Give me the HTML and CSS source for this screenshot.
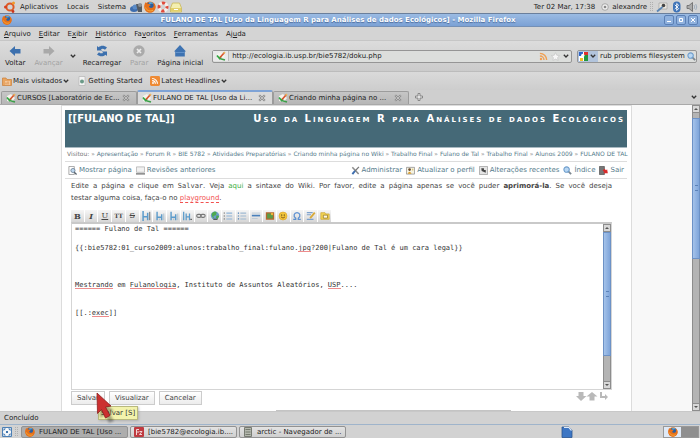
FILE: index.html
```html
<!DOCTYPE html>
<html lang="pt-BR">
<head>
<meta charset="utf-8">
<title>FULANO DE TAL</title>
<link rel="stylesheet" href="styles.css">
</head>
<body>
<svg class="defs" aria-hidden="true">
  <symbol id="firefox" viewBox="0 0 12 12"><circle cx="6" cy="6" r="5.6" fill="#e8731a"/><circle cx="6.2" cy="5" r="3.8" fill="#2b5f9f"/><path d="M5 1.2C7 .6 9 1.6 9.6 3 8 2.6 6 3 5.5 4z" fill="#58a5d8"/><path d="M.7 3 1.3 1.2 3 2.6C4.600 2.400 5.800 3.600 6.800 4.200L5 5.300C5 7 7.500 7.500 9 6.300 10 5.300 9.900 3 9.300 1.700 11.800 3.700 12.200 7 10.200 9.700 8 12.200 3.500 12.200 1.500 9.500.2 7.500.1 5 .7 3z" fill="#e6701a"/><path d="M1.600 6.500C2.500 9.500 6 10.800 9 9.200" fill="none" stroke="#f7b13c" stroke-width="1"/></symbol>
  <symbol id="wiki" viewBox="0 0 10 10"><path d="M1 3 5 1l4 4-3 4-5-1z" fill="#f5f3ec"/><path d="M1 4.500 3.500 7.500 5 5.500" fill="none" stroke="#2fa843" stroke-width="1.700"/><path d="M3.500 7.500 9 9" stroke="#3c9e49" stroke-width="1.500"/><path d="M4 6.500 8.500 1.500" stroke="#d9532c" stroke-width="1.600"/><path d="M7.600 2.500 9 1" stroke="#e9b75e" stroke-width="1.600"/></symbol>
  <symbol id="chev" viewBox="0 0 6 6"><path d="M.8 1.800 3 4 5.200 1.800" fill="none" stroke="#333" stroke-width="1.300"/></symbol>
  <symbol id="close" viewBox="0 0 8 8"><path d="M1.200 1.200 6.800 6.800M6.800 1.200 1.200 6.800" stroke="#8d8d8d" stroke-width="2.200"/><path d="M1.600 1.600 6.400 6.400M6.400 1.600 1.600 6.400" stroke="#d5d5d5" stroke-width=".7"/></symbol>
  <symbol id="rss" viewBox="0 0 10 10"><circle cx="2.200" cy="7.800" r="1.300"/><path d="M1 4.500A4.500 4.500 0 0 1 5.500 9M1 1.500A7.500 7.500 0 0 1 8.500 9" fill="none" stroke="currentColor" stroke-width="1.600"/></symbol>
  <symbol id="lens" viewBox="0 0 10 10"><path d="M6 6 9 9" stroke="#7d8790" stroke-width="2"/><circle cx="4" cy="4" r="3" fill="#b9d7f3" stroke="#6d9dcc" stroke-width="1.200"/></symbol>
  <symbol id="hlines" viewBox="0 0 12 12"><path d="M2.500 1v10M8 4v7M2.500 7.500H8" stroke="#5b9bcb" stroke-width="1.700" fill="none"/><path d="M10.500 3v8M5.500 9v2" stroke="#a3bccd" stroke-width="1"/></symbol>
</svg>

<header class="panel">
  <nav class="panel-menu">
    <svg class="i12" viewBox="0 0 12 12"><circle cx="6" cy="6" r="3.600" fill="none" stroke="#dd5a25" stroke-width="2"/><circle cx="1.500" cy="6" r="1.500" fill="#d8401f"/><circle cx="9.500" cy="2" r="1.500" fill="#f09a2a"/><circle cx="9" cy="10.500" r="1.400" fill="#c8331e"/></svg>
    <a href="#">Aplicativos</a><a href="#">Locais</a><a href="#">Sistema</a>
  </nav>
  <div class="launchers">
    <svg class="i13" viewBox="0 0 13 12"><ellipse cx="4" cy="8" rx="4" ry="3" fill="#3d6dae"/><circle cx="5" cy="6" r="2.500" fill="#5b8bc6"/><path d="M6 3h6v8H8z" fill="#545b62"/><circle cx="10" cy="4" r="2" fill="#8d9297"/></svg>
    <svg class="i12"><use href="#firefox"/></svg>
    <svg class="i12" viewBox="0 0 12 12"><circle cx="6" cy="6" r="4" fill="none" stroke="#f3efec" stroke-width="3"/><circle cx="6" cy="6" r="4" fill="none" stroke="#df4b3c" stroke-width="3" stroke-dasharray="3.140 3.140" stroke-dashoffset="1.570"/></svg>
    <svg class="i12" viewBox="0 0 12 12"><path d="M2.500 2h7l2 5v4H.5V7z" fill="#f4efb0" stroke="#c9b855" stroke-width=".8"/><path d="M1 7h10v3.500H1z" fill="#e2cf6a"/><path d="M4 8.500h4" stroke="#fff" stroke-width="1"/></svg>
  </div>
  <div class="tray">
    <span>Ter 02 Mar, 17:38</span>
    <svg class="i8" viewBox="0 0 8 8"><circle cx="4" cy="4" r="3.300" fill="#eee" stroke="#999" stroke-width=".8"/><circle cx="4" cy="4" r="1.300" fill="#888"/></svg>
    <span>alexandre</span>
    <i class="grip"></i>
    <svg class="i12" viewBox="0 0 12 12"><path d="M3 2h8v6H3z" fill="#ece9e2" stroke="#999" stroke-width=".6"/><circle cx="7.500" cy="4.500" r="1.800" fill="#444"/><path d="M1 10.500 6.500 6" stroke="#5b86b4" stroke-width="1.800"/></svg>
    <svg class="i12" viewBox="0 0 12 12"><rect x="2" y=".5" width="7.500" height="11" rx="3.700" fill="#3f74b8"/><path d="M3.800 3.800 7.600 7.600 5.700 9.500v-7L7.600 4.300 3.800 8" fill="none" stroke="#fff" stroke-width=".9"/></svg>
    <svg class="i12" viewBox="0 0 12 12"><path d="M1 4.500h2L6.500 1.500v9L3 7.500H1z" fill="#aaa" stroke="#666" stroke-width=".8"/><path d="M8 4q1.500 2 0 4M9.700 3q2.200 3 0 6" fill="none" stroke="#9aa8b8" stroke-width=".9"/></svg>
  </div>
</header>

<div class="titlebar">
  <svg class="i10"><use href="#firefox"/></svg>
  <h1>FULANO DE TAL [Uso da Linguagem R para Análises de dados Ecológicos] - Mozilla Firefox</h1>
  <div class="winbtns">
    <button aria-label="Minimizar"><svg viewBox="0 0 8 8"><path d="M2 5.500h4"/></svg></button>
    <button aria-label="Maximizar"><svg viewBox="0 0 8 8"><path d="M2.500 2.500h3v3h-3z"/></svg></button>
    <button aria-label="Fechar"><svg viewBox="0 0 8 8"><path d="M2 2 6 6M6 2 2 6"/></svg></button>
  </div>
</div>

<nav class="menubar">
  <a href="#"><u>A</u>rquivo</a><a href="#"><u>E</u>ditar</a><a href="#">E<u>x</u>ibir</a><a href="#"><u>H</u>istórico</a><a href="#">Fa<u>v</u>oritos</a><a href="#"><u>F</u>erramentas</a><a href="#">Aj<u>u</u>da</a>
</nav>

<div class="toolbar">
  <button class="tool"><svg viewBox="0 0 12 12"><path d="M.5 6 6 1v3h5.500v4.500H6V11z" fill="#3c70ae"/></svg>Voltar</button>
  <button class="tool" disabled><svg viewBox="0 0 12 12"><path d="M11.500 6 6 1v3H.5v4.500H6V11z" fill="#a9a9a9"/></svg>Avançar</button>
  <button class="drop" aria-label="Histórico recente"><svg class="i6"><use href="#chev"/></svg></button>
  <button class="tool"><svg viewBox="0 0 12 12"><path d="M1 5.500V1l1.600 1.300C5 0 8.500.4 11 2.500L9 4.800C7.500 3.400 6 3.300 4.800 4.300L6.300 5.500zM11 6.500V11L9.400 9.700C7 12 3.500 11.600 1 9.500L3 7.200c1.500 1.400 3 1.500 4.200.5L5.700 6.500z" fill="#3c70ae"/></svg>Recarregar</button>
  <button class="tool" disabled><svg viewBox="0 0 12 12"><circle cx="6" cy="6" r="5.700" fill="#aaa"/><path d="M4 4 8 8M8 4 4 8" stroke="#ececec" stroke-width="1.700"/></svg>Parar</button>
  <button class="tool"><svg viewBox="0 0 12 12"><path d="M6 0 12 6.500H10.800V11.500H1.200V6.500H0z" fill="#3e73b2"/><path d="M1.500 7.500h9" stroke="#6c9ad0" stroke-width=".8"/></svg>Página inicial</button>
  <div class="url">
    <span class="site"><svg class="i10"><use href="#wiki"/></svg></span>
    <input type="text" aria-label="Endereço" value="http://ecologia.ib.usp.br/bie5782/doku.php">
    <svg class="i9 orange"><use href="#rss"/></svg>
    <svg class="i9" viewBox="0 0 10 10"><path d="M5 .7 6.400 3.600 9.600 4 7.300 6.200 7.900 9.400 5 7.900 2.100 9.400 2.700 6.200.4 4 3.600 3.600z" fill="#f7f7f7" stroke="#c3c3c3" stroke-width=".7"/></svg>
    <svg class="i6"><use href="#chev"/></svg>
  </div>
  <div class="search">
    <button class="engine" aria-label="Mecanismo de busca"><svg class="i9" viewBox="0 0 9 9"><path d="M0 0h9v9H0z" fill="#fff"/><path d="M0 0h4v4H0z" fill="#2f65c8"/><path d="M5 0h4v4H5z" fill="#e0302b"/><path d="M5 3h4v6H5z" fill="#23983f"/><path d="M1 6h3v3H1z" fill="#f2c028"/><path d="M6 0h3v3H6z" fill="#e0302b"/><circle cx="3.800" cy="3.500" r="1.700" fill="#fff"/></svg><svg class="i6"><use href="#chev"/></svg></button>
    <input type="text" aria-label="Pesquisar" value="rub problems filesystem">
    <svg class="i9"><use href="#lens"/></svg>
  </div>
</div>

<nav class="bookmarks">
  <a href="#"><svg class="i10" viewBox="0 0 10 10"><path d="M.5 2h3.500l1 1.500H9.500V9.500H.5z" fill="#e9a561" stroke="#cc8038" stroke-width=".7"/><path d="M3 5h5v4H3z" fill="#f3c79a"/><path d="M4 8.500V6.500M6 8.500V5.500" stroke="#d97f2f" stroke-width=".8"/></svg>Mais visitados<svg class="i6"><use href="#chev"/></svg></a>
  <a href="#"><svg class="i10" viewBox="0 0 10 10"><path d="M2 .5h6V9.500H2z" fill="#f4f4f4" stroke="#b5b5b5" stroke-width=".7"/><circle cx="5" cy="5.500" r="2" fill="#6b9a88"/></svg>Getting Started</a>
  <a href="#"><svg class="i10" viewBox="0 0 14 14"><rect width="14" height="14" rx="2" fill="#ee8a34"/><svg x="2" y="2" width="10" height="10" class="white"><use href="#rss"/></svg></svg>Latest Headlines<svg class="i6"><use href="#chev"/></svg></a>
</nav>

<div class="tabs">
  <div class="tab"><svg class="i10"><use href="#wiki"/></svg><a href="#">CURSOS [Laboratório de Ec...</a><button aria-label="Fechar aba"><svg class="i8"><use href="#close"/></svg></button></div>
  <div class="tab active"><svg class="i10"><use href="#wiki"/></svg><a href="#">FULANO DE TAL [Uso da Li...</a><button aria-label="Fechar aba"><svg class="i8"><use href="#close"/></svg></button></div>
  <div class="tab"><svg class="i10"><use href="#wiki"/></svg><a href="#">Criando minha página no ...</a><button aria-label="Fechar aba"><svg class="i8"><use href="#close"/></svg></button></div>
  <button class="newtab" aria-label="Nova aba"><svg class="i8" viewBox="0 0 8 8"><path d="M3 .5h2V3h2.500v2H5v2.500H3V5H.5V3H3z" fill="#e4e4e4" stroke="#777" stroke-width=".8"/></svg></button>
  <button class="drop" aria-label="Listar abas"><svg class="i6"><use href="#chev"/></svg></button>
</div>

<div class="view">
  <main class="page">
    <div class="banner">
      <h2>[[FULANO DE TAL]]</h2>
      <p class="wikiname">Uso da Linguagem R para Análises de dados Ecológicos</p>
    </div>
    <nav class="crumbs">Visitou: » <a href="#">Apresentação</a> » <a href="#">Forum R</a> » <a href="#">BIE 5782</a> » <a href="#">Atividades Preparatórias</a> » <a href="#">Criando minha página no Wiki</a> » <a href="#">Trabalho Final</a> » <a href="#">Fulano de Tal</a> » <a href="#">Trabalho Final</a> » <a href="#">Alunos 2009</a> » <a href="#">FULANO DE TAL</a></nav>
    <nav class="actions">
      <a href="#"><svg class="i9" viewBox="0 0 10 10"><path d="M1 .5h6V9.500H1z" fill="#fff" stroke="#888" stroke-width=".8"/><circle cx="5.500" cy="5" r="2.300" fill="#bcd6ee" stroke="#6b7f93" stroke-width=".9"/><path d="M7 7 9.500 9.500" stroke="#55606b" stroke-width="1.400"/></svg>Mostrar página</a>
      <a href="#"><svg class="i9" viewBox="0 0 10 10"><path d="M.5 1h9v6h-9z" fill="#f1f1f1" stroke="#aaa" stroke-width=".8"/><path d="M0 8h10v1.500H0z" fill="#777"/></svg>Revisões anteriores</a>
      <a href="#" class="push"><svg class="i9" viewBox="0 0 10 10"><path d="M1.500 1.500 8.500 9" stroke="#8c8c8c" stroke-width="1.700"/><path d="M8.800 1 4.500 5.500" stroke="#777" stroke-width="1.400"/><path d="M4.500 5.500 1.500 9" stroke="#3f6fb0" stroke-width="2.200"/></svg>Administrar</a>
      <a href="#"><svg class="i9" viewBox="0 0 10 10"><path d="M.5 1.500h9v7.500h-9z" fill="#f6f3e2" stroke="#888" stroke-width=".8"/><circle cx="4" cy="4" r="1.500" fill="#6a4a2c"/><path d="M1.800 8.500q2-4 4.400 0z" fill="#d89c2e"/><path d="M7.500 3v2" stroke="#d3b545"/></svg>Atualizar o perfil</a>
      <a href="#"><svg class="i9" viewBox="0 0 10 10"><path d="M.5.5h9v9h-9z" fill="#e4e4e4" stroke="#999" stroke-width=".8"/><path d="M2.500 2.500h3v2h2v3L3 5.500z" fill="#444"/></svg>Alterações recentes</a>
      <a href="#"><svg class="i9"><use href="#lens"/></svg>Índice</a>
      <a href="#"><svg class="i9" viewBox="0 0 10 10"><path d="M.5.5h5.500v9H.5z" fill="#777" stroke="#444" stroke-width=".7"/><path d="M9.800 8 9 3.500 7.800 4.700 6 3 4 5l1.900 1.700L4.800 8z" fill="#db2a2a"/></svg>Sair</a>
    </nav>
    <form class="edit">
      <p><span class="full">Edite a página e clique em <span class="mono">Salvar</span>. Veja <a href="#" class="known">aqui</a> a sintaxe do Wiki. Por favor, edite a página apenas se você puder <b>aprimorá-la</b>. Se você deseja</span> testar alguma coisa, faça-o no <a href="#" class="missing">playground</a>.</p>
      <div class="picker">
        <button type="button" class="ser"><b>B</b></button>
        <button type="button" class="ser"><b><i>I</i></b></button>
        <button type="button" class="ser"><u>U</u></button>
        <button type="button" class="ser tt">TT</button>
        <button type="button" class="ser"><s>S</s></button>
        <button type="button" aria-label="Mesmo nível"><svg viewBox="0 0 12 12"><path d="M2.500 0v12M8 2v9M2.500 7H8" stroke="#5b9bcb" stroke-width="1.800"/><path d="M10.500 1v10" stroke="#555"/></svg></button>
        <button type="button" aria-label="Nível inferior"><svg><use href="#hlines"/></svg></button>
        <button type="button" aria-label="Nível superior"><svg><use href="#hlines"/></svg></button>
        <button type="button" aria-label="Título"><svg viewBox="0 0 12 12"><path d="M2 1v10M5 3v8M9 3v8M5 7h4" stroke="#5b9bcb" stroke-width="1.500"/><path d="M10 10h2" stroke="#333"/></svg></button>
        <button type="button" aria-label="Link interno"><svg viewBox="0 0 12 12"><rect x=".8" y="4" width="5.500" height="3.600" rx="1.800" fill="none" stroke="#777" stroke-width="1.300"/><rect x="5.500" y="4" width="5.500" height="3.600" rx="1.800" fill="none" stroke="#777" stroke-width="1.300"/></svg></button>
        <button type="button" aria-label="Link externo"><svg viewBox="0 0 12 12"><circle cx="6" cy="5.500" r="5" fill="#6a9cc9"/><path d="M2 3q4-4 6-1L7 5 4 6 5 9Q2 8 2 3zM8 5l3 1-2 4-2-2z" fill="#4ea94f"/><path d="M4 10h5" stroke="#555" stroke-width="1.500"/></svg></button>
        <button type="button" aria-label="Lista numerada"><svg viewBox="0 0 12 12"><path d="M4 2.500h7M4 6h7M4 9.500h7" stroke="#8fb4d8" stroke-width="1.300"/><path d="M1.500 1.500v2M1.500 5v2M1.500 8.500v2" stroke="#777"/></svg></button>
        <button type="button" aria-label="Lista"><svg viewBox="0 0 12 12"><path d="M4 2.500h7M4 6h7M4 9.500h7" stroke="#9fb9d2" stroke-width="1.300"/><path d="M1 2.500h1.500M1 6h1.500M1 9.500h1.500" stroke="#4a7fb5" stroke-width="1.400"/></svg></button>
        <button type="button" aria-label="Linha"><svg viewBox="0 0 12 12"><path d="M1 2.500h10M1 9h7" stroke="#b8c6d4"/><path d="M1 5.500h10" stroke="#4a80bb" stroke-width="2"/></svg></button>
        <button type="button" aria-label="Imagem"><svg viewBox="0 0 12 12"><path d="M1 1.500h10v9H1z" fill="#b5662c"/><path d="M2.500 3h7v6h-7z" fill="#5c9a47"/><circle cx="8.500" cy="3.500" r="1.500" fill="#f1b33b"/></svg></button>
        <button type="button" aria-label="Smileys"><svg viewBox="0 0 12 12"><circle cx="6" cy="6" r="4.800" fill="#f4c63a" stroke="#d99f24" stroke-width=".7"/><circle cx="4.500" cy="4.800" r=".7"/><circle cx="7.500" cy="4.800" r=".7"/><path d="M3.500 7q2.500 3 5 0" fill="none" stroke="#7a4d10"/></svg></button>
        <button type="button" aria-label="Caracteres especiais"><svg viewBox="0 0 12 12"><path d="M1.500 10h3V8.800C1 6 2.500 1.800 6 1.800S11 6 7.500 8.800V10h3" fill="none" stroke="#5b8fd0" stroke-width="1.500"/></svg></button>
        <button type="button" aria-label="Assinatura"><svg viewBox="0 0 12 12"><path d="M1 2h7M1 4.500h5M1 10h8" stroke="#7ca1cd" stroke-width="1.400"/><path d="M10.500 2 5 8.500" stroke="#d7a93a" stroke-width="2.200"/></svg></button>
        <button type="button" aria-label="Metadados"><svg viewBox="0 0 12 12"><path d="M1 2h5l1 1.500h4V10H1z" fill="#f2d354" stroke="#cca52c" stroke-width=".8"/><path d="M4 5h5v3.500H4z" fill="#fff8dd" stroke="#8a6d1c" stroke-width=".8"/></svg></button>
      </div>
      <div class="editor">
        <div class="pad">
          <textarea aria-label="Texto da página" spellcheck="false">====== Fulano de Tal ======

{{:bie5782:01_curso2009:alunos:trabalho_final:fulano.jpg?200|Fulano de Tal é um cara legal}}



Mestrando em Fulanologia, Instituto de Assuntos Aleatórios, USP....


[[.:exec]]</textarea>
          <div class="marks" aria-hidden="true"><i class="m1"></i><i class="m2"></i><i class="m3"></i><i class="m4"></i><i class="m5"></i></div>
        </div>
        <div class="scroll inner"><b class="cap up"></b><b class="thumb"></b><b class="track"></b><b class="cap down"></b></div>
      </div>
      <div class="submit">
        <button type="button">Salvar</button><button type="button">Visualizar</button><button type="button">Cancelar</button>
        <svg class="size" viewBox="0 0 32 9"><path d="M2.500 0h5v4h3L5 9 0 4h2.500zM13.500 8.500h5V4.500h3L16 0 10.500 4.500h3zM24 0h2v4h3V2l3 3-3 3V6h-5z" fill="#b9b9b9"/></svg>
      </div>
      <div class="summary"></div>
    </form>
  </main>
  <div class="scroll outer"><b class="cap up"></b><b class="gap"></b><b class="thumb"></b><b class="track"></b><b class="cap down"></b></div>
</div>

<footer class="status">Concluído</footer>
<footer class="taskbar">
  <svg class="i10" viewBox="0 0 10 10"><path d="M.5.5h9v9h-9z" fill="#f4f7fa" stroke="#4b7fb5"/><path d="M1.500 1.500h2.500L1.500 4zM8.500 1.500V4L6 1.500zM1.500 8.500V6L4 8.500zM8.500 8.500H6L8.500 6zM4 4h2v2H4z" fill="#3f74ad"/></svg>
  <i class="grip"></i>
  <button class="on"><svg class="i10"><use href="#firefox"/></svg>FULANO DE TAL [Uso ...</button>
  <button><svg class="i10" viewBox="0 0 10 10"><rect width="10" height="10" rx="1" fill="#bf3b40"/><path d="M2.500 8V2.500H5M2.500 5H5M5.500 7.500h2.500M5.500 4.500H8L5.500 7.500" fill="none" stroke="#f3d5d5"/></svg>[bie5782@ecologia.ib....</button>
  <button><svg class="i10" viewBox="0 0 10 10"><path d="M1.500.5h7v9h-7z" fill="#b4b8ae" stroke="#777b72"/><path d="M2.500 2.500h5M2.500 5h5M2.500 7.500h5" stroke="#6e7368" stroke-width=".9"/></svg>arctic - Navegador de ...</button>
  <svg class="i12 note" viewBox="0 0 12 12"><path d="M1 1h7l3 3v7.500H1z" fill="#3d76c4" stroke="#2b5590" stroke-width=".8"/><path d="M3 1.500h5l2.500 3" fill="none" stroke="#dfeaf6" stroke-width="1.200"/></svg>
  <div class="desks"><span><svg class="i10"><use href="#firefox"/></svg></span><span></span></div>
</footer>

<div class="tip" role="tooltip">Salvar [S]</div>
<svg class="cursor" viewBox="0 0 24 34" aria-hidden="true"><path class="shade" d="M5 6 20 20 15 21 20 30 15 32 11 24 6 27z"/><path d="M3 2 17 15 11.500 16 16 24.500 11.500 27 7.500 18.500 3.500 22.500z" fill="#cc3030" stroke="#8e1f1f" stroke-width=".8"/></svg>
</body>
</html>
```
FILE: styles.css
```css
* { box-sizing: border-box; }
body {
  margin: 0; height: 100vh; overflow: hidden; position: relative;
  display: flex; flex-direction: column;
  background: #d2d2d2; color: #222;
  font: 7px/10px "DejaVu Sans", sans-serif;
}
a { color: inherit; text-decoration: none; }
h1, h2, p { margin: 0; font-size: inherit; }
button, input, textarea { font: inherit; color: inherit; margin: 0; padding: 0; border: 0; background: none; border-radius: 0; }
svg { display: block; flex: none; }
.defs { position: absolute; width: 0; height: 0; }
.i6 { width: 6px; height: 6px; }
.i8 { width: 8px; height: 8px; }
.i9 { width: 9px; height: 9px; }
.i10 { width: 10px; height: 10px; }
.i12 { width: 12px; height: 12px; }
.i13 { width: 13px; height: 12px; }
.orange { color: #f0a052; fill: #f0a052; }
.white { color: #fff; fill: #fff; }
.grip { width: 3px; height: 9px; border: dotted #b0b0b0; border-width: 0 1px; }

.panel { display: flex; align-items: center; height: 13px; padding: 0 2px 0 4px; background: #d4d4d4; flex: none; }
.panel-menu { display: flex; align-items: center; gap: 9px; }
.panel-menu svg { margin-right: -5px; }
.launchers { display: flex; gap: 1px; margin-left: 4px; }
.tray { display: flex; align-items: center; gap: 3px; margin-left: auto; }
.tray > :first-child { margin-right: 3px; }

.titlebar {
  display: flex; align-items: center; height: 14px; padding: 0 2px; flex: none;
  background: linear-gradient(#9bbbe3, #7ba1d5); border-top: 1px solid #6a7f9c; border-bottom: 1px solid #7590b5;
}
.titlebar h1 { flex: 1; text-align: center; color: #fff; text-shadow: 0 1px 1px #4a6a9a; }
.winbtns { display: flex; gap: 2px; }
.winbtns button { width: 10px; height: 10px; border: 1px solid #5b80b5; border-radius: 2px; background: #8fb1de; }
.winbtns svg { width: 8px; height: 8px; fill: none; stroke: #fff; }

.menubar { display: flex; align-items: center; gap: 8px; height: 14px; padding: 0 4px; flex: none; background: #d4d4d4; border-bottom: 1px solid #c6c6c6; }
.toolbar { display: flex; align-items: center; gap: 9px; height: 31px; padding: 0 3px 0 5px; flex: none; background: linear-gradient(#dcdcdc, #cbcbcb); border-bottom: 1px solid #bcbcbc; }
.toolbar .drop { margin: 0 -2px; }
.tool { display: flex; flex-direction: column; align-items: center; gap: 1px; white-space: nowrap; }
.tool svg { width: 12px; height: 12px; }
.tool:disabled { color: #a2a2a2; }
.url, .search { display: flex; align-items: center; height: 13px; border: 1px solid #959595; border-radius: 2px; background: #dcdedc; }
.url { flex: 1; gap: 3px; padding-right: 2px; }
.url input, .search input { flex: 1; min-width: 0; height: 11px; }
.site { display: flex; padding: 0 2px 0 3px; border-right: 1px solid #bbb; background: #e9e9e9; }
.search { width: 120px; margin-left: -4px; }
.engine { display: flex; align-items: center; gap: 2px; height: 11px; padding: 0 2px 0 1px; background: #b2c4dc; margin-right: 2px; }

.bookmarks { display: flex; align-items: center; gap: 8px; height: 18px; padding: 0 2px; flex: none; background: linear-gradient(#dadada, #cdcdcd); }
.bookmarks a { display: flex; align-items: center; gap: 1px; }

.tabs { display: flex; align-items: flex-end; height: 15px; padding: 0 3px 0 1px; flex: none; background: #cfcfcf; border-bottom: 1px solid #a9a9a9; }
.tab { display: flex; align-items: center; gap: 1px; width: 136px; height: 13px; padding: 0 6px 0 4px; background: linear-gradient(#c6c6c6, #b6b6b6); border: 1px solid #9c9c9c; border-bottom: 0; border-radius: 2px 2px 0 0; white-space: nowrap; }
.tab a { flex: 1; }
.tab.active { height: 14px; background: #dadada; border-top: 2px solid #7ea3d6; }
.newtab { padding: 3px 6px; }
.tabs .drop { margin-left: auto; padding-bottom: 4px; }

.view { flex: 1; min-height: 0; overflow: hidden; display: flex; background: #f8f8f8; }
.page { flex: 1; min-width: 0; margin: 0 60px 0 61px; padding: 4px 4px 0 3px; background: #fff; border: solid #dcdcdc; border-width: 1px 1px 0; color: #444; }
.banner { display: flex; justify-content: space-between; height: 38px; padding: 3px 2px 3px 3px; background: #456977; color: #fff; border-bottom: 1px solid #a9bac2; font: bold 10px/12px "DejaVu Sans", sans-serif; white-space: nowrap; }
.wikiname { font-variant: small-caps; letter-spacing: 2px; }
.crumbs { padding: 2px 0 3px 2px; font-size: 6px; line-height: 8px; color: #777; border-bottom: 1px solid #ddd; white-space: nowrap; }
.crumbs a, .actions a { color: #557b8b; }
.actions { display: flex; gap: 4px; padding: 3px; border-bottom: 1px solid #ddd; white-space: nowrap; }
.actions a { display: flex; align-items: center; gap: 2px; }
.actions .push { margin-left: auto; }
.edit { padding: 1px 15px 0 6px; }
.edit p { line-height: 12px; }
.full { display: block; text-align-last: justify; }
.mono { font: 7px "DejaVu Sans Mono", monospace; }
.known { color: #3cae3c; }
.missing { color: #f2514f; border-bottom: 1px dashed #f2514f; }
.picker { display: flex; max-width: 260px; margin-top: 6px; height: 12px; gap: 1px; }
.picker button { flex: 1; min-width: 0; display: flex; justify-content: center; align-items: center; background: linear-gradient(#f6f6f6, #d6d6d6); }
.picker svg { width: 10px; height: 10px; }
.picker .ser { font: 8px/10px "DejaVu Serif", serif; }
.picker .tt { font-size: 6px; font-weight: bold; }
.editor { display: flex; height: 168px; border: 1px solid #d5d5d5; border-top: 2px solid #c9c9c9; }
.pad { position: relative; flex: 1; font: 7px/1.33 "DejaVu Sans Mono", monospace; }
.pad textarea { display: block; width: 100%; height: 100%; padding: 1px 3px; resize: none; overflow: hidden; outline: 0; color: #333; }
.marks { position: absolute; inset: 1px 3px; pointer-events: none; }
.marks i { position: absolute; height: 1px; background: #ee8c8c; }
.marks .m1 { top: 26px; left: 53ch; width: 3ch; }
.marks .m2 { top: 63px; left: 0; width: 9ch; }
.marks .m3 { top: 63px; left: 13ch; width: 11ch; }
.marks .m4 { top: 63px; left: 60ch; width: 3ch; }
.marks .m5 { top: 91px; left: 4ch; width: 4ch; }

.scroll { display: flex; flex-direction: column; width: 8px; flex: none; background: #b4b4b4; }
.scroll b { display: block; border: 1px solid #8d8d8d; }
.scroll .thumb { background: linear-gradient(90deg, #a5c3ea, #7fa5da); border-color: #6d92c6; display: flex; align-items: center; justify-content: center; }
.thumb::after { content: ""; width: 3px; height: 4px; border: solid #5b82b8; border-width: 1px 0; }
.scroll .track, .scroll .gap { border-width: 0 1px; }
.scroll .track { flex: 1; }
.scroll .cap { height: 8px; background: #d8d8d8; display: flex; justify-content: center; align-items: center; }
.cap::after { content: ""; border: 2px solid transparent; }
.up::after { border-top: 0; border-bottom-color: #555; }
.down::after { border-bottom: 0; border-top-color: #555; }
.outer .gap { height: 5px; }
.outer .thumb { height: 46%; }
.inner .thumb { height: 75%; }

.submit { display: flex; align-items: flex-start; gap: 4px; padding-top: 1px; }
.submit button { height: 14px; padding: 0 5px; border: 1px solid #ccc; background: linear-gradient(#fff, #ececec); }
.size { width: 32px; height: 9px; margin: 1px 4px 0 auto; }
.summary { width: 235px; height: 8px; margin: 5px 0 0 205px; background: #c4c4c4; }

.status { height: 13px; padding: 1px 4px; flex: none; background: #d2d2d2; border-top: 1px solid #c8c8c8; }
.taskbar { display: flex; align-items: center; gap: 2px; height: 14px; padding: 0 1px 0 2px; flex: none; background: #d2d2d2; border-top: 1px solid #9fb4cb; }
.taskbar .grip { margin: 0 1px; }
.taskbar button { display: flex; align-items: center; gap: 4px; width: 107px; height: 12px; padding: 0 3px; border: 1px solid #929292; border-radius: 2px; background: linear-gradient(#e3e3e3, #cfcfcf); white-space: nowrap; }
.taskbar .on { background: #adadad; }
.note { margin: 0 88px 0 auto; }
.desks { display: flex; border: 1px solid #999; }
.desks span { width: 17px; height: 10px; display: flex; justify-content: center; background: #dfe9f6; }
.desks span + span { background: #8f8f8f; }

.tip { position: absolute; left: 98px; bottom: 18px; padding: 1px 2px; background: #f3f3ac; border: 1px solid #b9b97e; box-shadow: 1px 1px 2px #9999; color: #333; }
.cursor { position: absolute; left: 94px; bottom: 13px; width: 24px; height: 34px; }
.shade { fill: #000; opacity: .3; filter: blur(1px); }
```
